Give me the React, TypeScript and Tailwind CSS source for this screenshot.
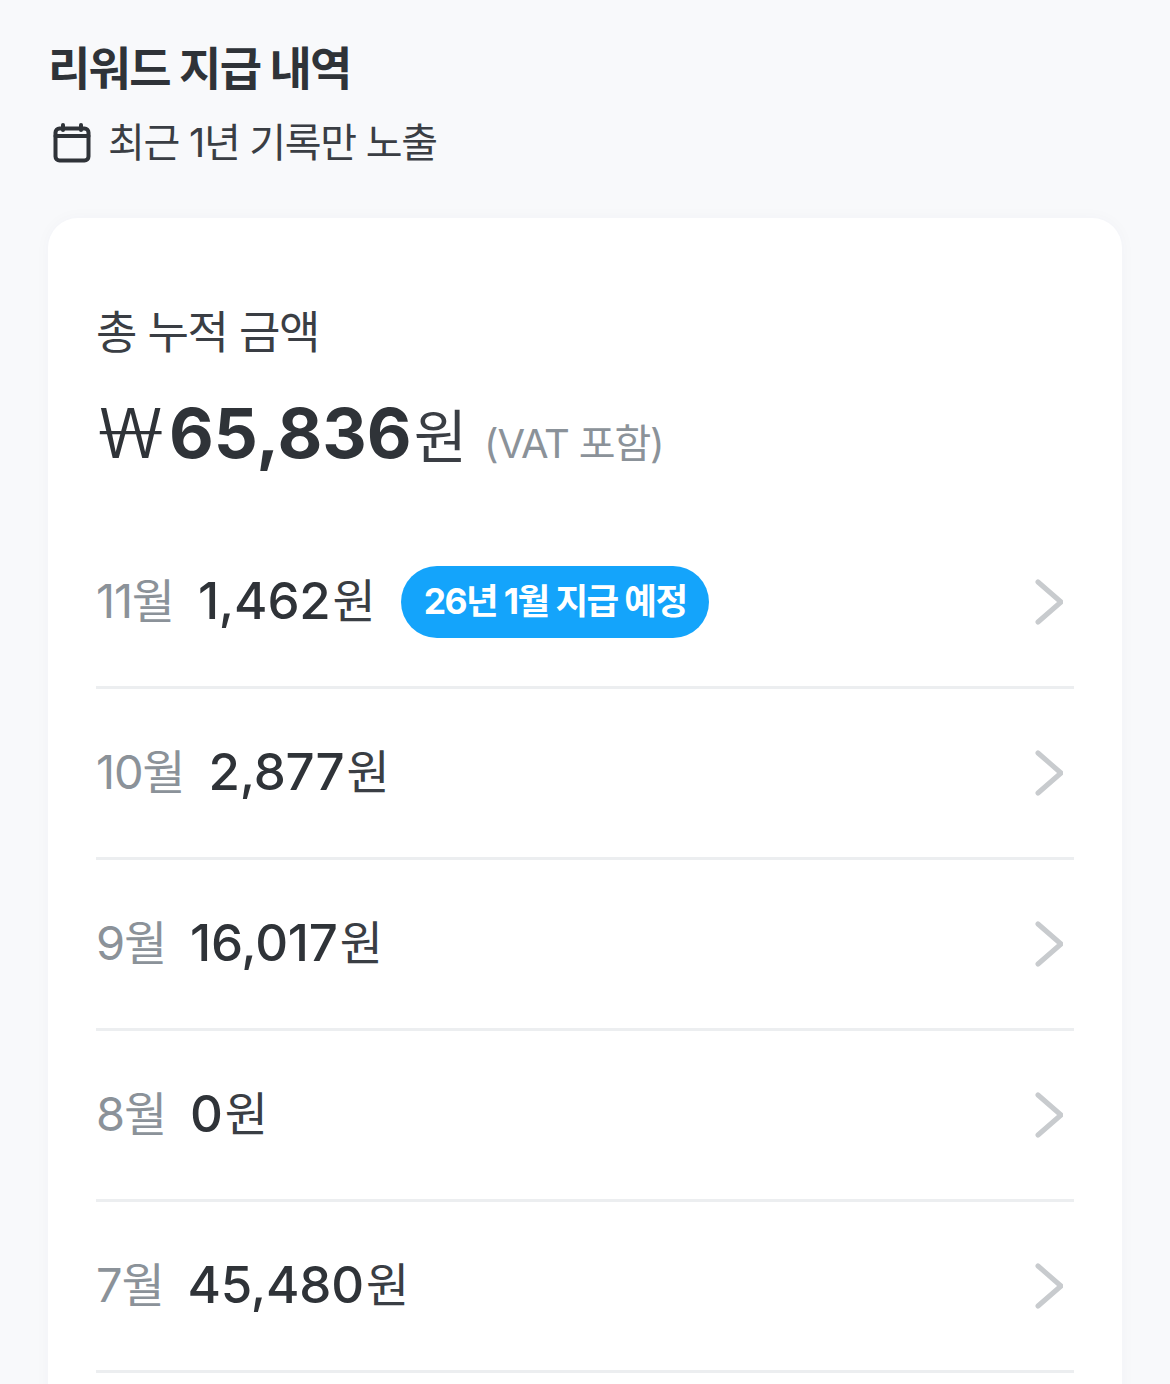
const rows = [
  { month: "11월", amount: "1,462", badge: "26년 1월 지급 예정" },
  { month: "10월", amount: "2,877" },
  { month: "9월", amount: "16,017" },
  { month: "8월", amount: "0" },
  { month: "7월", amount: "45,480" },
];

const CalendarIcon = () => (
  <svg width="38" height="40" viewBox="0 0 38 40" fill="none" stroke="#2f3338" strokeWidth="4" strokeLinecap="round" strokeLinejoin="round" className="shrink-0">
    <rect x="2.5" y="5.5" width="33" height="32" rx="4" />
    <path d="M2.5 13H35.5" />
    <path d="M10 2V7" />
    <path d="M28 2V7" />
  </svg>
);

const Chevron = () => (
  <svg width="28" height="46" viewBox="0 0 28 46" fill="none" stroke="#c8cbce" strokeWidth="5" strokeLinecap="round" strokeLinejoin="round" className="ml-auto mr-[11px] shrink-0">
    <path d="M3 3L26 23L3 43" />
  </svg>
);

export default function App() {
  return (
    <div
      className="h-[1384px] overflow-hidden bg-[#f8f9fb] px-12 pt-[40px] text-[#2f3338]"
      style={{ fontFamily: '"Inter", "Noto Sans CJK KR", sans-serif' }}
    >
      <h1 className="text-[46px] leading-[56px] font-bold tracking-[-1.7px]">리워드 지급 내역</h1>
      <div className="mt-[23px] ml-[5px] flex h-[48px] items-center gap-[17px]">
        <CalendarIcon />
        <span className="text-[40px] tracking-[-1.3px] text-[#3a3e44]">최근 1년 기록만 노출</span>
      </div>

      <section className="mt-[51px] rounded-t-[30px] bg-white px-12 pt-[84px] pb-[100px] shadow-[0_0_16px_rgba(30,50,80,0.03)]">
        <p className="text-[45px] leading-[62px] tracking-[-1.3px] text-[#3a3e44]">총 누적 금액</p>
        <div className="mt-[31px] flex h-[72px] items-baseline">
          <span className="ml-[3px] w-[70px] origin-left scale-x-[1.45] font-['Noto_Sans'] text-[69px] leading-[72px] font-[350]">₩</span>
          <span className="text-[69px] leading-[72px] font-bold">65,836</span>
          <span className="ml-[2px] text-[58px] leading-[72px] text-[#3a3e44]">원</span>
          <span className="ml-[17px] text-[40px] tracking-[-1.2px] text-[#8b9299]">(VAT 포함)</span>
        </div>

        <ul className="mt-[51px]">
          {rows.map((row) => (
            <li key={row.month} className="flex h-[171px] items-center border-b-[3px] border-[#eceef0] pb-[1px]">
              <span className="text-[47px] tracking-[-1.2px] text-[#8b9299]">{row.month}</span>
              <span className="ml-[24px] text-[51px] font-medium tracking-[-0.2px]">{row.amount}</span>
              <span className="ml-[2px] text-[47px] text-[#3a3e44]">원</span>
              {row.badge && (
                <span className="ml-[25px] flex h-[72px] items-center rounded-full bg-[#14a4fb] px-[23px] text-[35.5px] font-bold tracking-[-1.6px] text-white">
                  {row.badge}
                </span>
              )}
              <Chevron />
            </li>
          ))}
        </ul>
      </section>
    </div>
  );
}
